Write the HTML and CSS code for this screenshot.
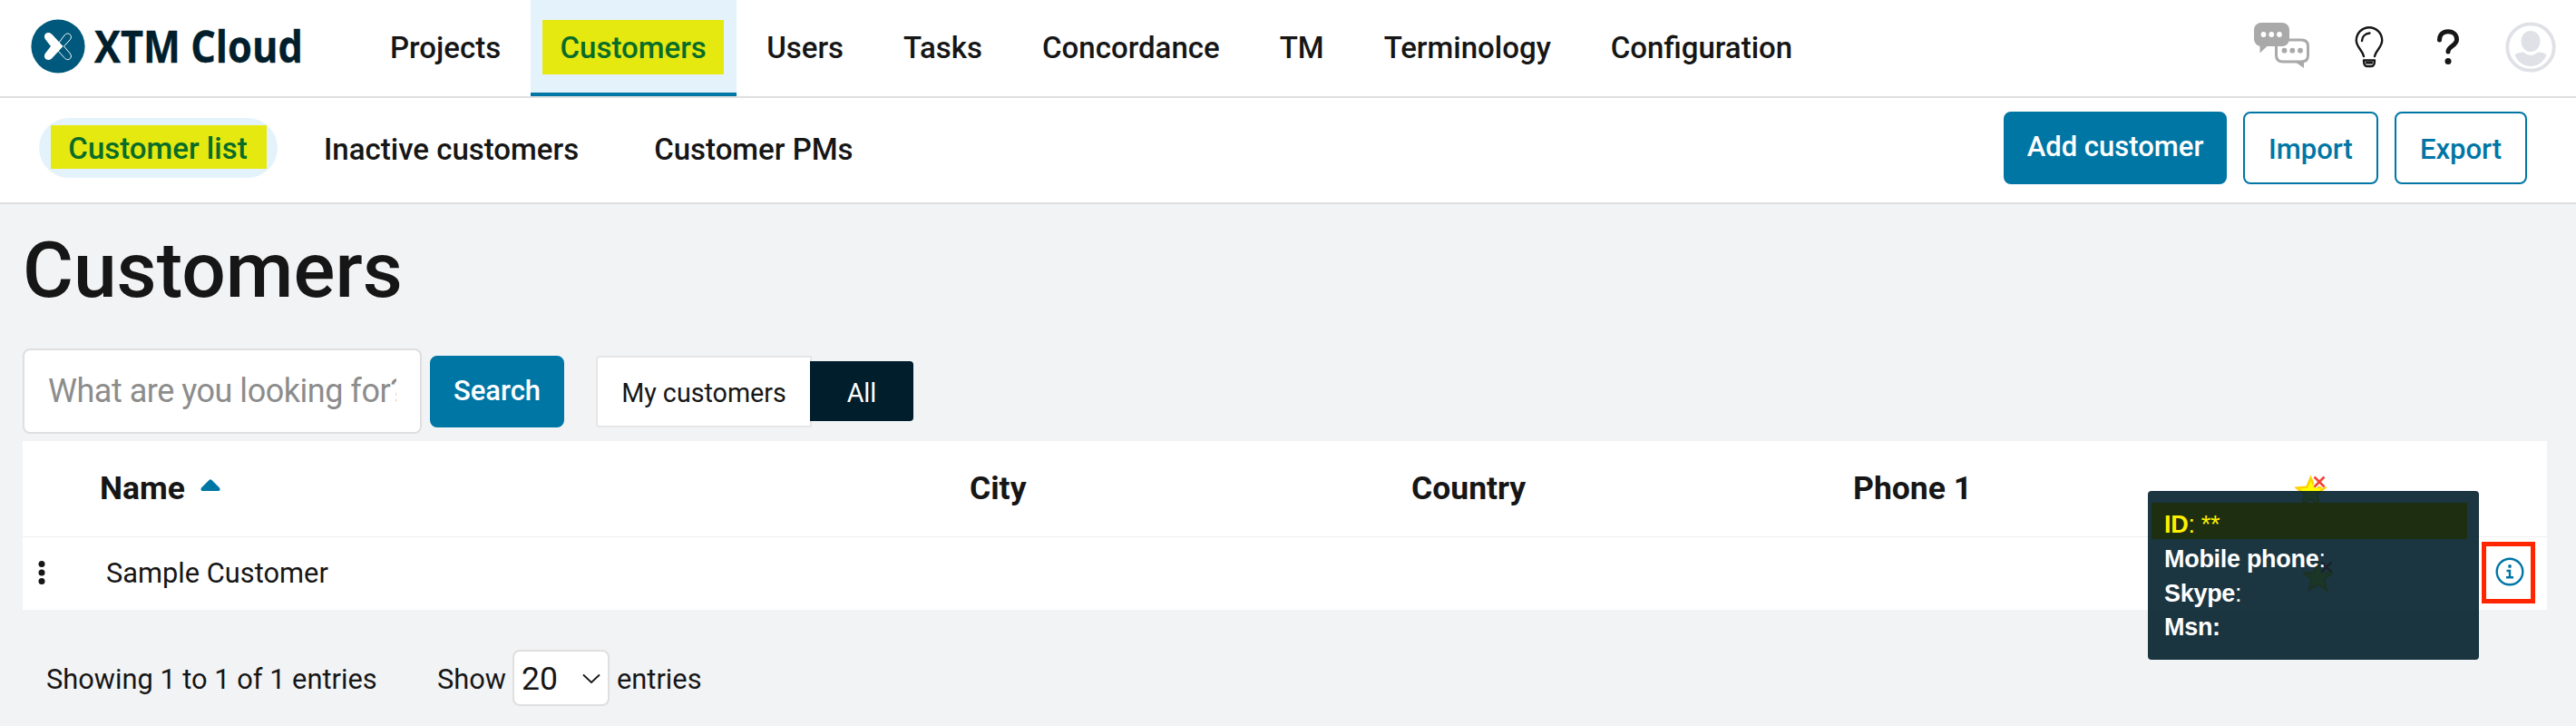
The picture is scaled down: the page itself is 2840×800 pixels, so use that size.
FILE: index.html
```html
<!DOCTYPE html>
<html lang="en">
<head>
<meta charset="utf-8">
<title>Customers</title>
<link rel="stylesheet" href="styles.css">
</head>
<body>
<header class="topbar">
  <a class="logo">
    <svg class="logo-mark" viewBox="0 0 60 60">
      <circle cx="30" cy="30" r="29.600" fill="#00587c"/>
      <path d="M31 26l6-8c2-2.600 4.800-2.400 6.300-.9 1.500 1.500 1.500 3.600 0 5.600L36.500 30l6.800 8c1.500 2 1.500 4.100 0 5.600-1.500 1.500-4.300 1.500-6.300-.9L30 35" fill="none" stroke="#fff" stroke-width="1"/>
      <path d="M23.500 17c-2.200-2.400-5.400-2.600-7.200-.9-1.800 1.700-1.800 4.200-.2 6.400L22 30l-5.900 7.500c-1.600 2.200-1.600 4.700.2 6.400 1.800 1.700 5 1.500 7.200-.9L35.500 30z" fill="#fff"/>
    </svg>
    <span class="logo-text">XTM Cloud</span>
  </a>
  <nav class="mainnav">
    <a class="tab">Projects</a>
    <a class="tab active"><mark>Customers</mark></a>
    <a class="tab">Users</a>
    <a class="tab">Tasks</a>
    <a class="tab">Concordance</a>
    <a class="tab">TM</a>
    <a class="tab">Terminology</a>
    <a class="tab">Configuration</a>
  </nav>
  <div class="tools">
    <svg class="ic-chat" viewBox="0 0 61 50">
      <path d="M38 19h14q7.500 0 7.500 7v10q0 7-7.500 7H32q-7.500 0-7.500-7V26" fill="none" stroke="#a9a9a9" stroke-width="3"/>
      <path d="M45 43h10v7z" fill="#a9a9a9"/>
      <rect width="39" height="26" rx="8" fill="#a9a9a9"/>
      <path d="M6.500 24v9.500l10-9.500z" fill="#a9a9a9"/>
      <g fill="#fff"><circle cx="10.500" cy="13" r="2.900"/><circle cx="19.300" cy="13" r="2.900"/><circle cx="28" cy="13" r="2.900"/></g>
      <g fill="#a9a9a9"><circle cx="33.500" cy="30.700" r="2.900"/><circle cx="42.300" cy="30.700" r="2.900"/><circle cx="51" cy="30.700" r="2.900"/></g>
    </svg>
    <svg class="ic-bulb" viewBox="0 0 32 46" fill="none" stroke="#161616" stroke-width="2.400" stroke-linecap="round" stroke-linejoin="round">
      <path d="M10 33C8.500 26 1.800 23 1.800 15.500a14 14 0 0 1 28.400 0c0 7.500-6.700 10.500-8.200 17.500M8 16c0-4.500 3.500-7.800 8.500-8.500"/>
      <path d="M10 37.500h12c0 4-1.500 6.500-3.500 6.500h-5c-2 0-3.500-2.500-3.500-6.500zM13 40.300h6"/>
    </svg>
    <svg class="ic-help" viewBox="0 0 26 39">
      <path d="M3.500 12C3.500 6 7.500 2.700 13 2.700S22.500 6 22.500 11.500c0 7-9.500 7.500-9.500 13.500" fill="none" stroke="#161616" stroke-width="5" stroke-linecap="round"/>
      <circle cx="13" cy="35.500" r="3.500" fill="#161616"/>
    </svg>
    <svg class="ic-user" viewBox="0 0 56 56">
      <circle cx="28" cy="28" r="25.700" fill="none" stroke="#dfe1e6" stroke-width="3.800"/>
      <ellipse cx="28" cy="21.500" rx="10.500" ry="11.500" fill="#dfe1e6"/>
      <path d="M10.500 36q5-3 9.500-2.500Q28 40.500 36 33.500q4.500-.5 9.500 2.500C43 44 36 49 28 49s-15-5-17.500-13z" fill="#dfe1e6"/>
    </svg>
  </div>
</header>

<div class="subbar">
  <nav class="subnav">
    <a class="pill"><mark>Customer list</mark></a>
    <a class="sub">Inactive customers</a>
    <a class="sub">Customer PMs</a>
  </nav>
  <div class="actions">
    <button class="btn primary add">Add customer</button>
    <button class="btn outline import">Import</button>
    <button class="btn outline export">Export</button>
  </div>
</div>

<main class="page">
  <h1>Customers</h1>
  <div class="filters">
    <div class="searchbox"><span>What are you looking for?</span></div>
    <button class="btn primary search">Search</button>
    <div class="toggle"><span class="mine">My customers</span><span class="all">All</span></div>
  </div>
  <section class="table">
    <div class="row head">
      <span class="name">Name <svg class="sort" viewBox="0 0 22 13"><path d="M9.500 1q1.500-1.500 3 0l8.500 8.500q1.500 3.500-1.500 3.500h-17q-3 0-1.500-3.500z" fill="#0076a5"/></svg></span>
      <span>City</span><span>Country</span><span>Phone 1</span>
      <svg class="star" viewBox="0 0 35 35"><path d="M17.500 2.500l4.200 10.200 11.300.8-8.700 7.200 2.800 11.300-9.600-6-9.600 6 2.800-11.300L2 13.500l11.300-.8z" fill="#ff0" stroke="#ffd000" stroke-width="2.400"/><path d="M21.500 1.500l11 11m0-11l-11 11" stroke="#fff" stroke-width="5"/><path d="M21.500 1.500l11 11m0-11l-11 11" stroke="#f44336" stroke-width="2.600"/></svg>
    </div>
    <div class="row body">
      <svg class="dots" viewBox="0 0 8 28" fill="#161616"><circle cx="4" cy="4.500" r="3.500"/><circle cx="4" cy="14" r="3.500"/><circle cx="4" cy="23.500" r="3.500"/></svg>
      <span class="cust">Sample Customer</span>
      <svg class="star" viewBox="0 0 35 35"><path d="M17.500 2.500l4.200 10.200 11.300.8-8.700 7.200 2.800 11.300-9.600-6-9.600 6 2.800-11.300L2 13.500l11.300-.8z" fill="#ff0" stroke="#ffd000" stroke-width="2.400"/><path d="M21.500 1.500l11 11m0-11l-11 11" stroke="#fff" stroke-width="5"/><path d="M21.500 1.500l11 11m0-11l-11 11" stroke="#f44336" stroke-width="2.600"/></svg>
      <span class="infobox"><svg viewBox="0 0 32 32"><circle cx="16" cy="16" r="14.300" fill="none" stroke="#0076a5" stroke-width="2.400"/><circle cx="16" cy="10" r="1.900" fill="#0076a5"/><path d="M12.500 15H16v7M12 22.300h8" fill="none" stroke="#0076a5" stroke-width="2.400"/></svg></span>
    </div>
    <div class="tooltip">
      <div class="tip id"><b>ID</b>: **</div>
      <div class="tip">Mobile phone<i>:</i></div>
      <div class="tip">Skype<i>:</i></div>
      <div class="tip">Msn:</div>
    </div>
  </section>
  <footer class="pager">
    <span class="showing">Showing 1 to 1 of 1 entries</span>
    <span class="show">Show</span>
    <span class="select">20<svg viewBox="0 0 20 12"><path d="M1 1.500l9 8.500 9-8.500" fill="none" stroke="#161616" stroke-width="1.800"/></svg></span>
    <span class="entries">entries</span>
  </footer>
</main>
</body>
</html>
```

FILE: styles.css
```css
* { box-sizing: border-box; }
body {
  margin: 0;
  height: 800px;
  overflow: hidden;
  background: #f2f3f5;
  color: #161616;
  font-family: Roboto, "Liberation Sans", sans-serif;
}
svg { display: block; flex: none; }
span, a { white-space: nowrap; }
mark { background: #e5e910; color: #096c29; display: flex; align-items: center; justify-content: center; }

.topbar {
  display: flex;
  height: 108px;
  background: #fff;
  border-bottom: 2px solid #dfdfdf;
}
.logo { display: flex; width: 397px; padding-left: 34px; }
.logo-mark { width: 60px; height: 60px; margin-top: 21px; }
.logo-text {
  margin: 17px 0 0 10px;
  font: 700 49px/66px "Open Sans", sans-serif;
  color: #001e2b;
  -webkit-text-stroke: .4px #001e2b;
  transform: scaleX(.885);
  transform-origin: 0 0;
}
.mainnav { display: flex; font-weight: 500; font-size: 33px; line-height: 106px; }
.tab { padding: 0 33px; height: 106px; }
.tab.active {
  width: 227px;
  padding: 22px 14px 0 13px;
  background: #e4f3fb;
  border-bottom: 4px solid #0076a5;
}
.tab.active mark { height: 60px; line-height: 62px; padding-top: 2px; }
.tools { display: flex; margin-left: auto; padding-right: 22px; }
.ic-chat { width: 61px; height: 50px; margin: 25px 50px 0 0; }
.ic-bulb { width: 32px; height: 46px; margin: 29px 58px 0 0; }
.ic-help { width: 26px; height: 39px; margin: 32px 50px 0 0; }
.ic-user { width: 56px; height: 56px; margin-top: 24px; }

.subbar {
  display: flex;
  justify-content: space-between;
  height: 117px;
  background: #fff;
  border-bottom: 2px solid #dfdfdf;
}
.subnav { display: flex; padding: 22px 0 0 43px; font-weight: 500; font-size: 33px; line-height: 69px; }
.pill { width: 263px; height: 66px; border-radius: 33px; background: #e4f3fb; padding: 8px 12px 0 13px; }
.pill mark { height: 48px; line-height: 48px; padding: 4px 2px 0 0; }
.sub { margin-left: 51px; margin-right: 32px; }
.actions { display: flex; gap: 18px; padding: 15px 54px 0 0; }
.btn {
  font: 500 31px/75px Roboto, sans-serif;
  height: 80px;
  padding: 0;
  border: 2px solid #0076a5;
  border-radius: 8px;
  white-space: nowrap;
}
.primary { background: #0076a5; color: #fff; }
.outline { background: #fff; color: #0076a5; padding-top: 2px; }
.add { width: 246px; line-height: 74px; padding-bottom: 2px; }
.import { width: 149px; }
.export { width: 146px; }

.page { padding-left: 25px; }
h1 { margin: 0; padding-top: 23px; height: 159px; font-weight: 500; font-size: 85.700px; line-height: 100px; }
.filters { display: flex; height: 102px; }
.searchbox {
  width: 440px;
  height: 94px;
  padding: 0 26px;
  background: #fff;
  border: 2px solid #dfdfdf;
  border-radius: 8px;
  font-size: 36px;
  letter-spacing: -.48px;
  line-height: 90px;
  color: #8c8c8c;
}
.searchbox span { display: block; overflow: hidden; }
.search { width: 148px; height: 79px; margin: 8px 0 0 9px; line-height: 73px; padding-bottom: 2px; }
.toggle { display: flex; margin: 8px 0 0 35px; font-size: 28.700px; }
.mine { width: 238px; height: 79px; background: #fff; border: 2px solid #e6e6e6; border-radius: 4px 0 0 4px; text-align: center; line-height: 79px; }
.all { width: 114px; height: 66px; margin: 6px 0 0 -2px; background: #001e2b; color: #fff; border-radius: 0 4px 4px 0; text-align: center; line-height: 70px; }

.table { position: relative; width: 2783px; height: 186px; background: #fff; }
.row { display: flex; }
.head {
  height: 106px;
  padding-left: 85px;
  border-bottom: 1px solid #f0f0f0;
  font-weight: 700;
  font-size: 35.500px;
  line-height: 104px;
}
.head span { width: 487px; }
.head .name { display: flex; width: 959px; }
.sort { width: 22px; height: 13px; margin: 42px 0 0 17px; }
.star { width: 35px; height: 35px; }
.head .star { margin: 38px 0 0 0; }
.dots { width: 8px; height: 28px; margin: 25px 0 0 17px; }
.cust { margin-left: 67px; width: 2421px; font-size: 30.800px; line-height: 79px; }
.body .star { margin: 26px 0 0 0; }
.infobox { position: absolute; left: 2711px; top: 111px; width: 59px; height: 68px; border: 5px solid #ff2600; padding: 12px 0 0 10px; }
.infobox svg { width: 32px; height: 32px; }
.tooltip {
  position: absolute;
  left: 2343px;
  top: 55px;
  width: 365px;
  height: 186px;
  padding: 13px 13px 0 4px;
  border-radius: 4px;
  background: rgba(0, 30, 43, .895);
  color: #fff;
  font: 700 27px/37.500px "Liberation Sans", Arial, sans-serif;
  letter-spacing: -.3px;
}
.tip { padding-left: 14px; }
.tip i { font-style: normal; font-weight: 400; }
.tip.id { height: 40px; padding-top: 6px; margin-bottom: 4px; background: #1d2f10; color: #fff000; font-weight: 400; }

.pager { display: flex; padding: 44px 0 0 26px; font-size: 30.800px; line-height: 65px; }
.showing { width: 431px; }
.show { width: 83px; }
.select { display: flex; justify-content: space-between; width: 107px; height: 62px; padding: 0 8px 0 8px; background: #fff; border: 2px solid #dfdfdf; border-radius: 8px; font-size: 35.500px; line-height: 60px; }
.select svg { width: 20px; height: 12px; margin-top: 24px; }
.entries { margin-left: 8px; }
```
